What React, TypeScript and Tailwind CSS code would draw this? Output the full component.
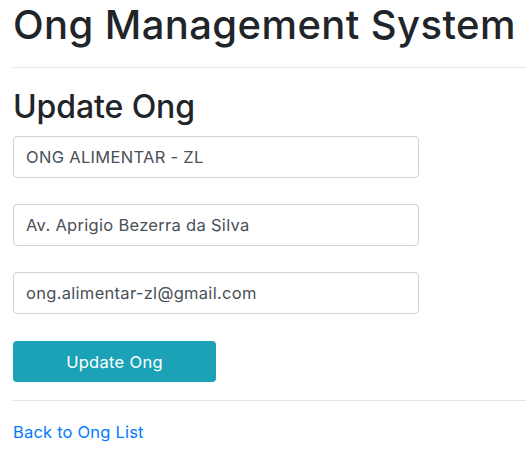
import React from "react";

const inputCls =
  "h-[42px] w-full rounded-[4px] border border-[#ced4da] px-[12px] text-[16.5px] tracking-[0.3px] text-[#495057] outline-none";

export default function App() {
  return (
    <div className="w-[526px] h-[461px] bg-white overflow-hidden pl-[13px] font-['Inter',sans-serif] text-[#212529]">
      <h1 className="text-[40px] leading-[48px] font-medium tracking-[0.4px] pt-[1px] whitespace-nowrap">Ong Management System</h1>
      <hr className="mt-[18px] border-0 border-t border-[#e5e5e5]" />
      <h2 className="mt-[20px] text-[32px] leading-[38px] font-medium tracking-[-0.1px]">Update Ong</h2>
      <form className="mt-[10px] flex flex-col gap-[26px] w-[406px]" onSubmit={(e) => e.preventDefault()}>
        <input className={inputCls} defaultValue="ONG ALIMENTAR - ZL" />
        <input className={inputCls} defaultValue="Av. Aprigio Bezerra da Silva" />
        <input className={inputCls} defaultValue="ong.alimentar-zl@gmail.com" />
      </form>
      <button className="mt-[27px] h-[41px] w-[203px] rounded-[4px] bg-[#1ca2b7] text-white text-[16.5px] tracking-[0.3px] leading-[24px]">
        Update Ong
      </button>
      <hr className="mt-[18px] border-0 border-t border-[#e5e5e5]" />
      <a href="#" className="block mt-[19px] text-[16.5px] tracking-[0.2px] leading-[24px] text-[#007bff]">
        Back to Ong List
      </a>
    </div>
  );
}
